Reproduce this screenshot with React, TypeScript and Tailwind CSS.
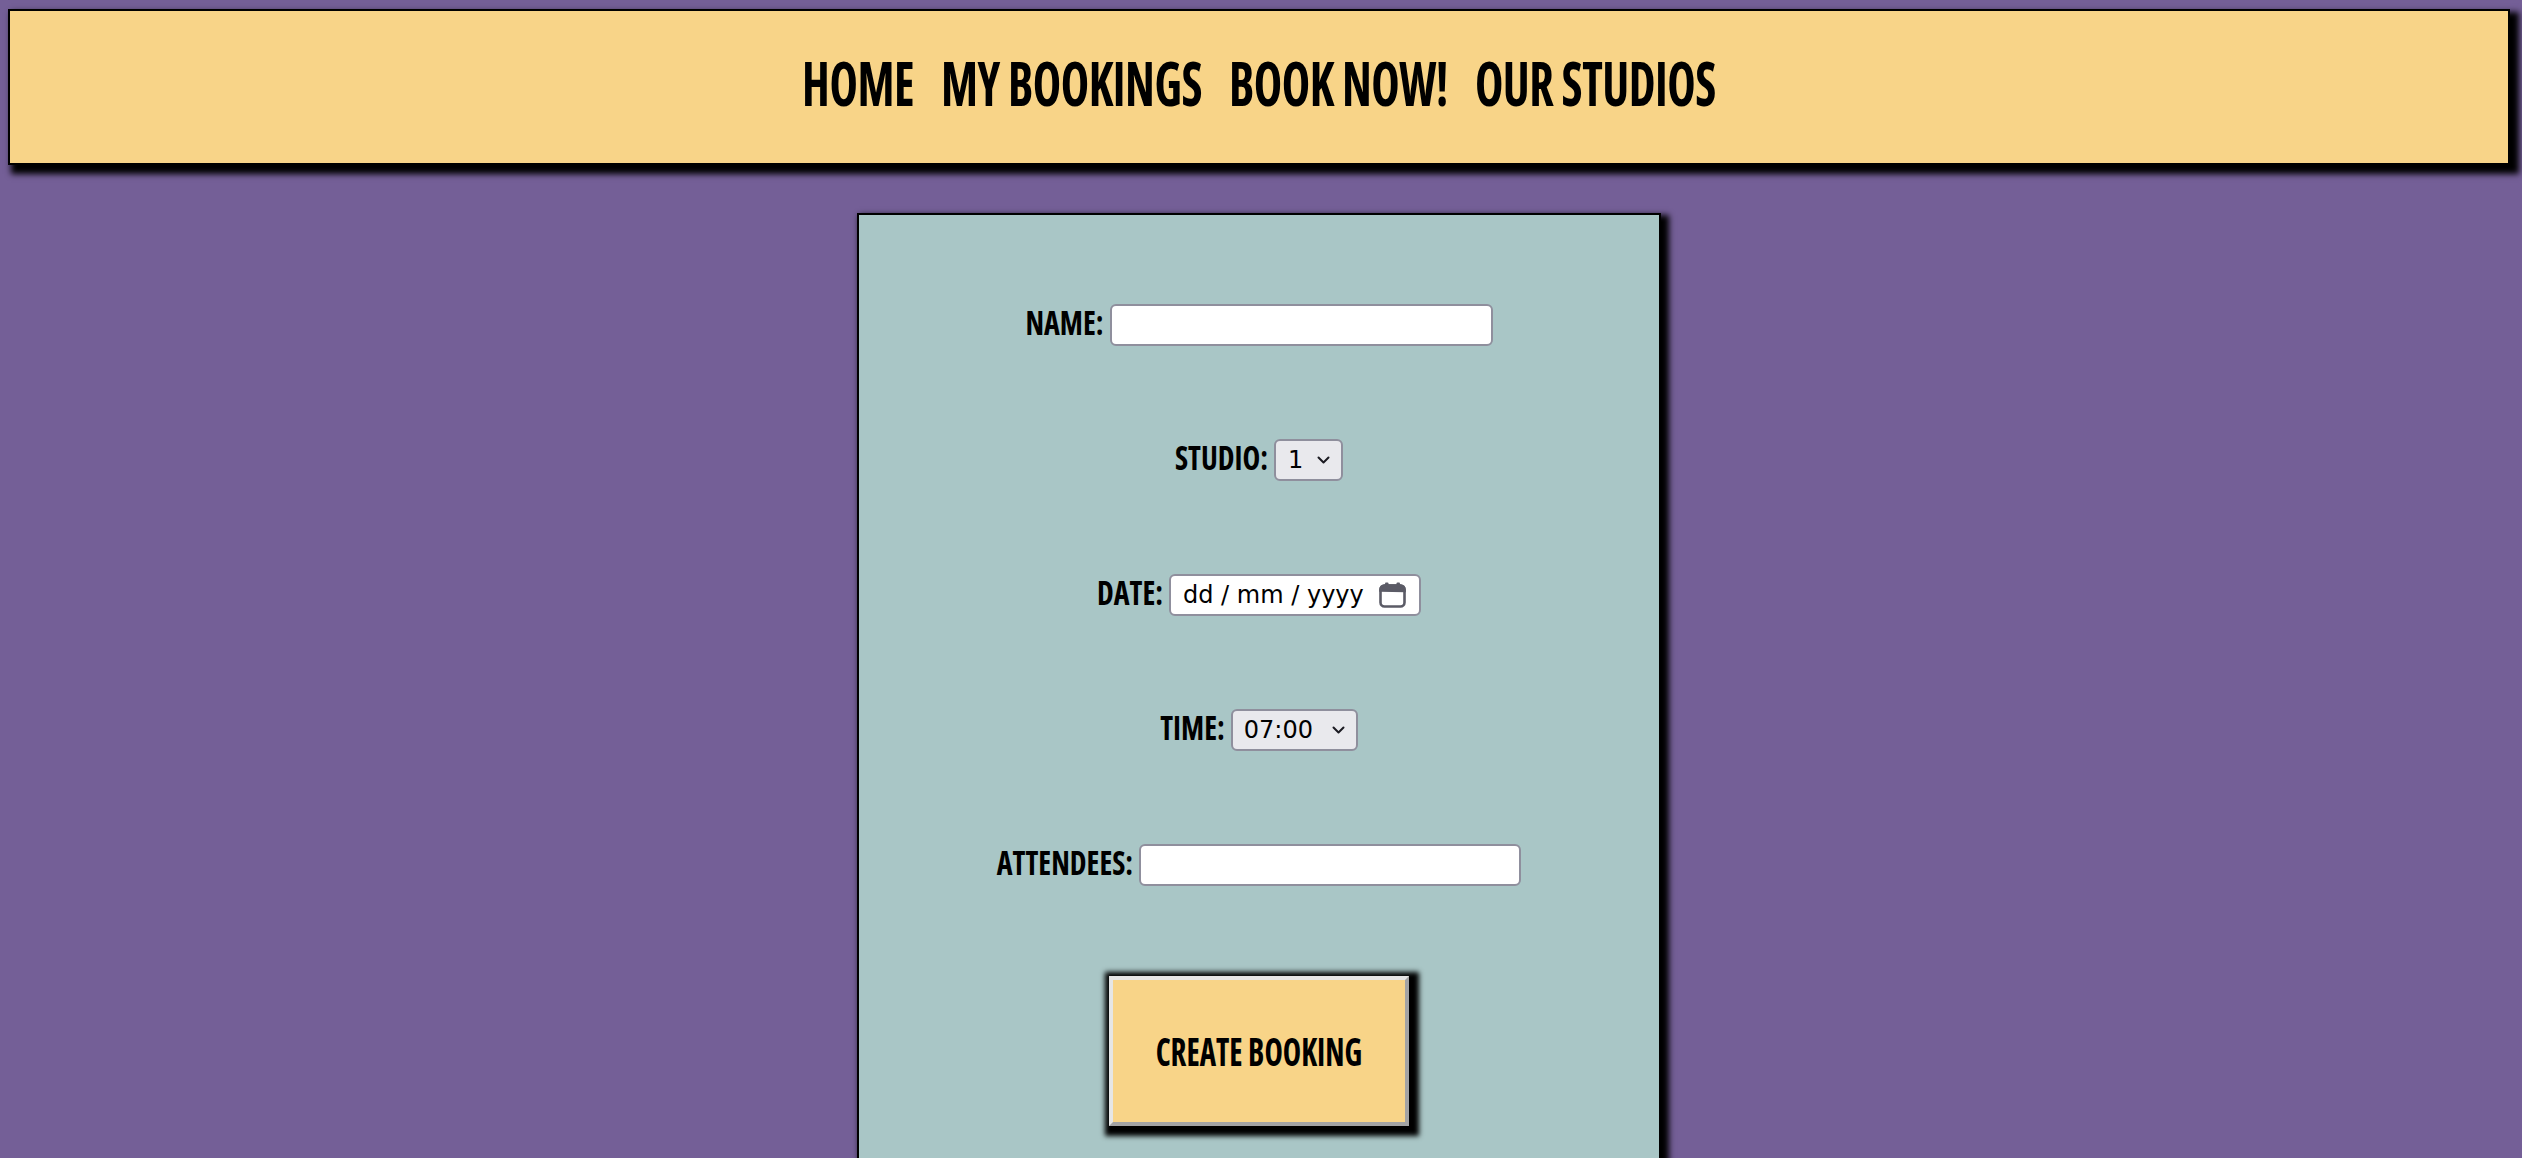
const display = "font-['Open_Sans',sans-serif] [font-stretch:75%] font-bold uppercase text-black";
const control = "h-[42px] rounded-[6px] border-2 border-[#8f8f9d] font-['DejaVu_Sans',sans-serif] text-[24px] text-black";

const navItems = ["Home", "My Bookings", "Book Now!", "Our Studios"];

function Chevron() {
  return (
    <svg width="13" height="8" viewBox="0 0 13 8" fill="none" stroke="#1c1b22" strokeWidth="2" strokeLinecap="round" strokeLinejoin="round">
      <path d="M1.5 1.5 6.5 6.5 11.5 1.5" />
    </svg>
  );
}

function CalendarIcon() {
  return (
    <svg width="27" height="26" viewBox="0 0 27 26" fill="none">
      <rect x="6" y="0.5" width="3.5" height="5" rx="1" fill="#5b5b66" />
      <rect x="17.5" y="0.5" width="3.5" height="5" rx="1" fill="#5b5b66" />
      <rect x="1.5" y="3.5" width="24" height="21" rx="4" stroke="#5b5b66" strokeWidth="2.6" />
      <path d="M1.5 8.5V7.5a4 4 0 0 1 4-4h16a4 4 0 0 1 4 4v1.5Z" fill="#5b5b66" stroke="#5b5b66" strokeWidth="2.6" />
    </svg>
  );
}

function Row({ label, children }: { label: string; children: React.ReactNode }) {
  return (
    <div className="flex items-center gap-[6px]">
      <label className={`${display} inline-block text-[30px] leading-none mb-[6px] scale-y-[1.15]`}>{label}</label>
      {children}
    </div>
  );
}

export default function App() {
  return (
    <div className="h-[1158px] overflow-hidden bg-[#745f97] pt-[9px]">
      <header className="ml-[8px] mr-[12px] h-[156px] border-2 border-black bg-[#f8d488] shadow-[6px_6px_6px_3px_#000] flex items-center justify-center pb-[8px]">
        <nav className="flex gap-[27px]">
          {navItems.map((item) => (
            <a key={item} href="#" className={`${display} inline-block text-[48px] leading-none tracking-[-0.01em] scale-y-[1.28]`}>
              {item}
            </a>
          ))}
        </nav>
      </header>

      <main className="flex justify-center pr-[4px] mt-[48px]">
        <form className="w-[804px] h-[1100px] border-2 border-black bg-[#a9c6c6] shadow-[5px_5px_6px_3px_#000] flex flex-col items-center pt-[89px] gap-[93px]">
          <Row label="Name:">
            <input type="text" className={`${control} w-[383px] bg-white px-[4px]`} />
          </Row>

          <Row label="Studio:">
            <div className={`${control} w-[69px] bg-[#e9e9ed] flex items-center justify-between pl-[12px] pr-[11px]`}>
              <span>1</span>
              <Chevron />
            </div>
          </Row>

          <Row label="Date:">
            <div className={`${control} w-[252px] bg-white flex items-center justify-between pl-[12px] pr-[13px]`}>
              <span>dd / mm / yyyy</span>
              <CalendarIcon />
            </div>
          </Row>

          <Row label="Time:">
            <div className={`${control} w-[127px] bg-[#e9e9ed] flex items-center justify-between pl-[11px] pr-[11px]`}>
              <span>07:00</span>
              <Chevron />
            </div>
          </Row>

          <Row label="Attendees:">
            <input type="text" className={`${control} w-[382px] bg-white px-[4px]`} />
          </Row>

          <button
            type="button"
            className={`${display} -mt-[3px] w-[300px] h-[150px] bg-[#f8d488] border-4 border-t-[#e6e6e6] border-l-[#e6e6e6] border-b-[#a3a3a3] border-r-[#a3a3a3] shadow-[3px_3px_5px_7px_#000] text-[31px] leading-none`}
          >
            <span className="inline-block scale-y-[1.25]">Create Booking</span>
          </button>
        </form>
      </main>
    </div>
  );
}
